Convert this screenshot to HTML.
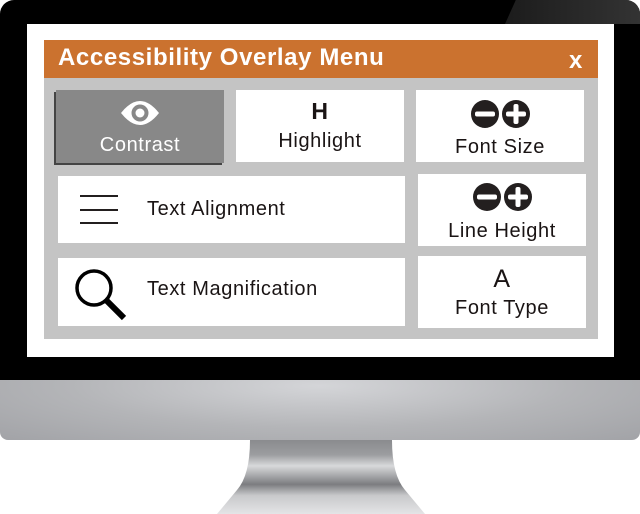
<!DOCTYPE html>
<html><head><style>
*{margin:0;padding:0;box-sizing:border-box}
body{width:640px;height:514px;background:#fff;position:relative;overflow:hidden;font-family:"Liberation Sans",sans-serif}
.abs{position:absolute}
.btn{position:absolute;background:#fff;color:#1a1414;font-size:20px;letter-spacing:0.6px;text-align:center}
</style></head><body>
<div class="abs" style="left:0;top:0;width:640px;height:400px;background:#000;border-radius:14px 14px 0 0"></div>
<div class="abs" style="left:505px;top:0;width:135px;height:24px;background:linear-gradient(90deg,#1c1c1c,#333);clip-path:polygon(8% 0,100% 0,100% 100%,0 100%);border-radius:0 14px 0 0"></div>
<div class="abs" style="left:0;top:380px;width:640px;height:60px;background:radial-gradient(ellipse at 50% 10%,#d4d5d8,#b4b5b8 55%,#a2a3a7);border-radius:0 0 8px 8px"></div>
<svg class="abs" style="left:0;top:0" width="640" height="514">
<defs><linearGradient id="st" x1="0" y1="0" x2="0" y2="1">
<stop offset="0" stop-color="#8a8b8e"/><stop offset=".2" stop-color="#9c9da0"/><stop offset=".35" stop-color="#d8d9db"/><stop offset=".6" stop-color="#7c7d80"/><stop offset=".75" stop-color="#c8c9cb"/><stop offset="1" stop-color="#e4e4e6"/></linearGradient></defs>
<path d="M250 440 L392 440 Q392 475 405 490 L425 514 L217 514 L237 490 Q250 475 250 440Z" fill="url(#st)"/>
</svg>
<div class="abs" style="left:27px;top:24px;width:587px;height:333px;background:#fff"></div>
<div class="abs" style="left:44px;top:40px;width:554px;height:38px;background:#cb722f;color:#fff;font-weight:bold;font-size:24px;letter-spacing:0.6px;line-height:36px;padding-left:14px">Accessibility Overlay Menu<span style="position:absolute;right:15px;top:3px;font-size:24px">x</span></div>
<div class="abs" style="left:44px;top:78px;width:554px;height:261px;background:#c4c4c4"></div>
<div class="btn" style="left:56px;top:90px;width:168px;height:73px;background:#888;color:#fff;box-shadow:-2px 2px 0 #444">
<svg width="48" height="36" style="margin-top:5px" viewBox="0 0 48 36"><path d="M5 18 Q24 -6 43 18 Q24 42 5 18Z" fill="#fff"/><circle cx="24" cy="18" r="8.5" fill="#888"/><circle cx="24" cy="18" r="4.5" fill="#fff"/></svg>
<div style="margin-top:-3px">Contrast</div></div>
<div class="btn" style="left:236px;top:90px;width:168px;height:72px"><div style="font-weight:bold;font-size:23px;margin-top:10px;line-height:23px">H</div><div style="margin-top:7px">Highlight</div></div>
<div class="btn" style="left:416px;top:90px;width:168px;height:72px">
<svg width="64" height="30" style="margin-top:9px" viewBox="0 0 64 30"><circle cx="17" cy="15" r="14" fill="#231f1f"/><rect x="7" y="12.5" width="20" height="5" rx="2" fill="#fff"/><circle cx="48" cy="15" r="14" fill="#231f1f"/><rect x="38" y="12.5" width="20" height="5" rx="2" fill="#fff"/><rect x="45.5" y="5" width="5" height="20" rx="2" fill="#fff"/></svg>
<div style="margin-top:1px">Font Size</div></div>
<div class="btn" style="left:58px;top:176px;width:347px;height:67px;text-align:left">
<div class="abs" style="left:22px;top:19px;width:38px;height:2px;background:#231f1f"></div>
<div class="abs" style="left:22px;top:33px;width:38px;height:2px;background:#231f1f"></div>
<div class="abs" style="left:22px;top:46px;width:38px;height:2px;background:#231f1f"></div>
<div class="abs" style="left:89px;top:22px">Text Alignment</div></div>
<div class="btn" style="left:418px;top:174px;width:168px;height:72px">
<svg width="64" height="30" style="margin-top:8px" viewBox="0 0 64 30"><circle cx="17" cy="15" r="14" fill="#231f1f"/><rect x="7" y="12.5" width="20" height="5" rx="2" fill="#fff"/><circle cx="48" cy="15" r="14" fill="#231f1f"/><rect x="38" y="12.5" width="20" height="5" rx="2" fill="#fff"/><rect x="45.5" y="5" width="5" height="20" rx="2" fill="#fff"/></svg>
<div style="margin-top:2px">Line Height</div></div>
<div class="btn" style="left:58px;top:258px;width:347px;height:68px;text-align:left">
<svg class="abs" style="left:14px;top:8px" width="58" height="56" viewBox="0 0 58 56"><circle cx="22" cy="22" r="17" fill="none" stroke="#000" stroke-width="3.5"/><line x1="34" y1="34" x2="52" y2="52" stroke="#000" stroke-width="6"/></svg>
<div class="abs" style="left:89px;top:20px">Text Magnification</div></div>
<div class="btn" style="left:418px;top:256px;width:168px;height:72px"><div style="font-size:25px;margin-top:10px;line-height:26px">A</div><div style="margin-top:5px">Font Type</div></div>
</body></html>
